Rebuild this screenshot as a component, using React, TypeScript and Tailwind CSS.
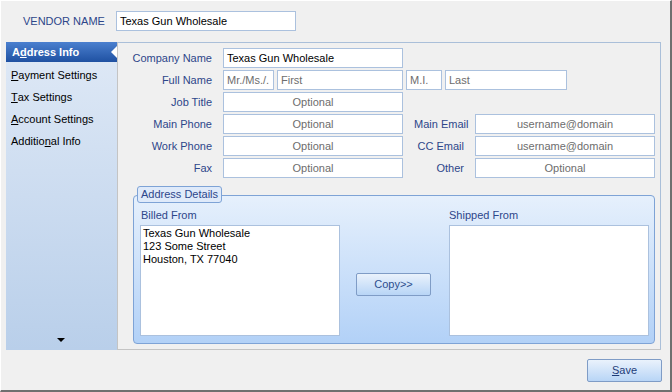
import React from 'react'

const font = { fontFamily: '"Liberation Sans", Arial, sans-serif' }

function Field({ w, value, ph, center }: { w: string; value?: string; ph?: string; center?: boolean }) {
  return (
    <div
      className={`${w} shrink-0 h-[20px] bg-white border border-[#abc1de] px-[3px] flex items-center text-[11px] leading-none whitespace-nowrap ${
        center ? 'justify-center' : ''
      } ${value ? 'text-black' : 'text-[#6d6d6d]'}`}
    >
      {value ?? ph}
    </div>
  )
}

function Label({ w, children }: { w: string; children: React.ReactNode }) {
  return (
    <div className={`${w} shrink-0 text-right text-[11px] text-[#2d468a] leading-none whitespace-nowrap`}>{children}</div>
  )
}

function NavItem({ children, active }: { children?: React.ReactNode; active?: boolean }) {
  if (active)
    return (
      <div className="relative h-[20px] flex items-center pl-[6px] bg-gradient-to-b from-[#4b80cf] to-[#1f51a2] text-white font-bold text-[11px]">
        <span>
          A<span className="underline">d</span>dress Info
        </span>
        <div className="absolute right-0 top-[4px] w-0 h-0 border-y-[6px] border-y-transparent border-r-[6px] border-r-white" />
      </div>
    )
  return <div className="h-[22px] flex items-center pl-[5px] text-[11px] text-black whitespace-nowrap">{children}</div>
}

export default function App() {
  return (
    <div
      style={font}
      className="w-[672px] h-[392px] bg-[#f0f0f0] border-t border-l border-t-white border-l-white border-r-2 border-b-2 border-r-[#6f6f6f] border-b-[#6f6f6f] flex flex-col overflow-hidden"
    >
      {/* vendor name */}
      <div className="h-[41px] shrink-0 flex items-start pt-[10px]">
        <div className="w-[115px] shrink-0 pl-[22px] pt-[5px] text-[11px] text-[#2d468a] leading-none">VENDOR NAME</div>
        <Field w="w-[180px]" value="Texas Gun Wholesale" />
      </div>

      <div className="flex h-[308px] shrink-0 pl-[5px] pr-[9px]">
        {/* side nav */}
        <div className="w-[111px] shrink-0 bg-gradient-to-b from-[#dfe9f6] to-[#b9cfea] flex flex-col">
          <NavItem active />
          <div className="h-[2px]" />
          <NavItem>
            <span className="underline">P</span>ayment Settings
          </NavItem>
          <NavItem>
            <span className="underline">T</span>ax Settings
          </NavItem>
          <NavItem>
            <span className="underline">A</span>ccount Settings
          </NavItem>
          <NavItem>
            Additio<span className="underline">n</span>al Info
          </NavItem>
          <div className="flex-1" />
          <div className="flex justify-center pb-[8px] pr-[2px]">
            <div className="w-0 h-0 border-x-[4px] border-x-transparent border-t-[4px] border-t-black" />
          </div>
        </div>

        {/* main panel */}
        <div className="flex-1 min-w-0 border border-[#aabfd9] border-l-[#c4c4c4] border-b-[#c4c4c4] pt-[5px] flex flex-col">
          <div className="flex flex-col gap-[2px]">
            <div className="flex items-center gap-[11px]">
              <Label w="w-[94px]">Company Name</Label>
              <Field w="w-[180px]" value="Texas Gun Wholesale" />
            </div>
            <div className="flex items-center gap-[11px]">
              <Label w="w-[94px]">Full Name</Label>
              <div className="flex">
                <Field w="w-[51px]" ph="Mr./Ms./." />
                <div className="w-[3px]" />
                <Field w="w-[126px]" ph="First" />
                <div className="w-[3px]" />
                <Field w="w-[36px]" ph="M.I." />
                <div className="w-[3px]" />
                <Field w="w-[122px]" ph="Last" />
              </div>
            </div>
            <div className="flex items-center gap-[11px]">
              <Label w="w-[94px]">Job Title</Label>
              <Field w="w-[180px]" ph="Optional" center />
            </div>
            {[
              ['Main Phone', 'Main Email', 'username@domain'],
              ['Work Phone', 'CC Email', 'username@domain'],
              ['Fax', 'Other', 'Optional'],
            ].map(([a, b, p]) => (
              <div key={a} className="flex items-center gap-[11px]">
                <Label w="w-[94px]">{a}</Label>
                <Field w="w-[180px]" ph="Optional" center />
                <Label w="w-[50px]">{b}</Label>
                <Field w="w-[180px]" ph={p} center />
              </div>
            ))}
          </div>

          {/* address details group */}
          <div className="relative mt-[17px] ml-[15px] mr-[5px] h-[149px] border border-[#7ea3d6] rounded-[4px] bg-gradient-to-b from-[#e6f0fc] to-[#b2d1f7] px-[6px] pt-[9px] flex gap-[16px]">
            <div className="absolute -top-[10px] left-[3px] h-[17px] px-[3px] border border-[#7ea3d6] rounded-[3px] bg-[#dfeafa] text-[11px] text-[#2d468a] leading-none flex items-center">
              Address Details
            </div>
            <div className="flex flex-col">
              <div className="h-[20px] flex items-center text-[11px] text-[#2d468a] pl-[1px]">Billed From</div>
              <div className="w-[200px] h-[111px] bg-white border border-[#abc1de] px-[2px] py-[1px] text-[11px] leading-[13px] text-black">
                Texas Gun Wholesale
                <br />
                123 Some Street
                <br />
                Houston, TX 77040
              </div>
            </div>
            <div className="flex items-center pt-[20px] pr-[2px]">
              <div className="w-[75px] h-[23px] border border-[#7f9cc6] rounded-[2px] bg-gradient-to-b from-[#eaf2fc] to-[#b8d5f6] flex items-center justify-center text-[11px] text-[#2d4e8e]">
                Copy&gt;&gt;
              </div>
            </div>
            <div className="flex flex-col">
              <div className="h-[20px] flex items-center text-[11px] text-[#2d468a]">Shipped From</div>
              <div className="w-[200px] h-[111px] bg-white border border-[#abc1de]" />
            </div>
          </div>
        </div>
      </div>

      {/* footer */}
      <div className="flex-1 flex justify-end items-start pt-[9px] pr-[8px]">
        <div className="w-[75px] h-[23px] border border-[#7f9cc6] rounded-[2px] bg-gradient-to-b from-[#eaf2fc] to-[#b8d5f6] flex items-center justify-center text-[11px] text-[#1e3c78]">
          <span>
            <span className="underline">S</span>ave
          </span>
        </div>
      </div>
    </div>
  )
}
